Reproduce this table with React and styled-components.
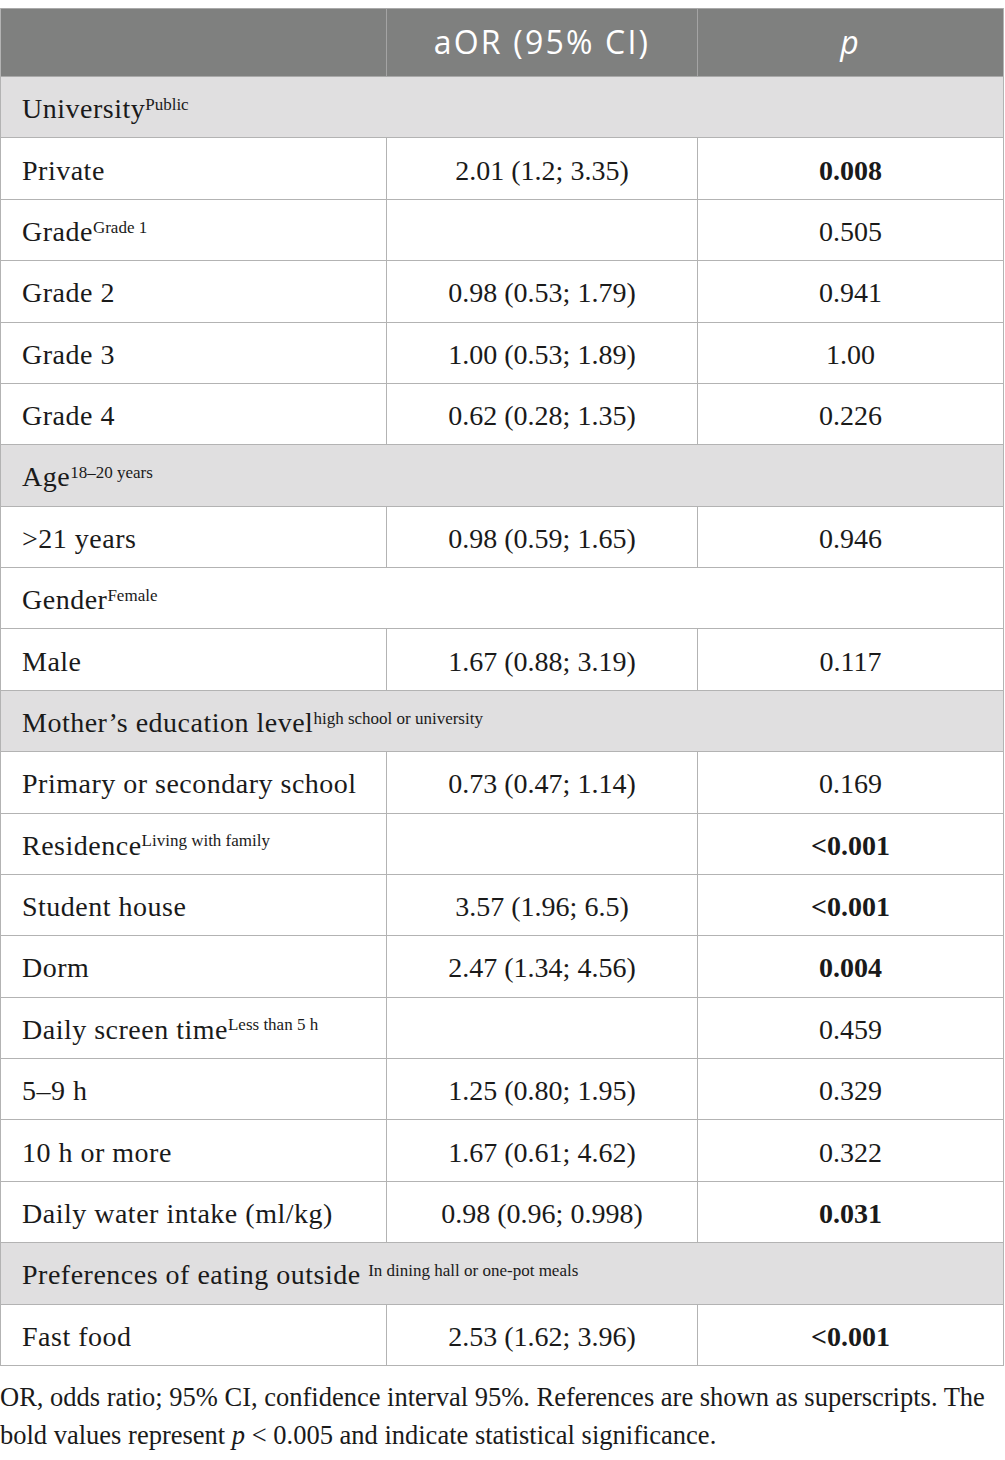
import React from 'react'
import styled, { createGlobalStyle } from 'styled-components'

const Global = createGlobalStyle`
    body {
        margin: 0;
        background: #ffffff;
    }
`

const Page = styled.div`
    width: 1005px;
    padding-top: 8px;
    font-family: "Liberation Serif", "Times New Roman", serif;
    color: #1a1a1a;
`

const Table = styled.div`
    display: flex;
    flex-direction: column;
    border-left: 1px solid #b3b3b3;
    border-right: 1px solid #b3b3b3;
    width: 1004px;
    box-sizing: border-box;
`

const HeadRow = styled.div`
    display: grid;
    grid-template-columns: 385px 311px 1fr;
    height: 69px;
    background: #7f807f;
    border-top: 1px solid #a9a9a9;
    border-bottom: 1px solid #a9a9a9;
    box-sizing: border-box;
`

const HeadCell = styled.div`
    display: flex;
    align-items: center;
    justify-content: center;
    border-left: ${p => (p.$first ? 'none' : '1px solid #a4a4a4')};
    font-family: "Open Sans", "Noto Sans", sans-serif;
    font-size: 32px;
    letter-spacing: 2.2px;
    font-style: ${p => (p.$italic ? 'italic' : 'normal')};
    color: #ffffff;
    padding-bottom: 2px;
`

const Row = styled.div`
    display: grid;
    grid-template-columns: 385px 311px 1fr;
    height: 61.38px;
    border-bottom: 1px solid #b3b3b3;
    box-sizing: border-box;
    background: ${p => (p.$shade ? '#e0dfe0' : '#ffffff')};
`

const FullCell = styled.div`
    grid-column: 1 / -1;
    display: flex;
    align-items: center;
    padding: 4px 0 0 21px;
    font-size: 28px;
    letter-spacing: 0.5px;
    white-space: nowrap;
`

const Label = styled.div`
    display: flex;
    align-items: center;
    padding: 4px 0 0 21px;
    font-size: 28px;
    letter-spacing: 0.5px;
    white-space: nowrap;
`

const Value = styled.div`
    display: flex;
    align-items: center;
    justify-content: center;
    padding-top: 4px;
    border-left: 1px solid #b3b3b3;
    font-size: 28px;
    font-weight: ${p => (p.$bold ? 700 : 400)};
    white-space: nowrap;
`

const Sup = styled.sup`
    font-size: 17px;
    letter-spacing: 0;
    line-height: 0;
    position: relative;
    top: 2px;
    vertical-align: super;
`

const Note = styled.p`
    margin: 12px 0 0 0;
    font-size: 26.5px;
    line-height: 38px;
    white-space: nowrap;
    color: #1a1a1a;
`

const rows = [
    { kind: 'section', label: 'University', ref: 'Public' },
    { label: 'Private', or: '2.01 (1.2; 3.35)', p: '0.008', bold: true },
    { label: 'Grade', ref: 'Grade 1', or: '', p: '0.505' },
    { label: 'Grade 2', or: '0.98 (0.53; 1.79)', p: '0.941' },
    { label: 'Grade 3', or: '1.00 (0.53; 1.89)', p: '1.00' },
    { label: 'Grade 4', or: '0.62 (0.28; 1.35)', p: '0.226' },
    { kind: 'section', label: 'Age', ref: '18–20 years' },
    { label: '>21 years', or: '0.98 (0.59; 1.65)', p: '0.946' },
    { kind: 'plain', label: 'Gender', ref: 'Female' },
    { label: 'Male', or: '1.67 (0.88; 3.19)', p: '0.117' },
    { kind: 'section', label: 'Mother’s education level', ref: 'high school or university' },
    { label: 'Primary or secondary school', or: '0.73 (0.47; 1.14)', p: '0.169' },
    { label: 'Residence', ref: 'Living with family', or: '', p: '<0.001', bold: true },
    { label: 'Student house', or: '3.57 (1.96; 6.5)', p: '<0.001', bold: true },
    { label: 'Dorm', or: '2.47 (1.34; 4.56)', p: '0.004', bold: true },
    { label: 'Daily screen time', ref: 'Less than 5 h', or: '', p: '0.459' },
    { label: '5–9 h', or: '1.25 (0.80; 1.95)', p: '0.329' },
    { label: '10 h or more', or: '1.67 (0.61; 4.62)', p: '0.322' },
    { label: 'Daily water intake (ml/kg)', or: '0.98 (0.96; 0.998)', p: '0.031', bold: true },
    { kind: 'section', label: 'Preferences of eating outside ', ref: 'In dining hall or one-pot meals' },
    { label: 'Fast food', or: '2.53 (1.62; 3.96)', p: '<0.001', bold: true },
]

const Name = ({ label, refText }) => (
    <span>
        {label}
        {refText && <Sup>{refText}</Sup>}
    </span>
)

const App = () => (
    <Page>
        <Global />
        <Table>
            <HeadRow>
                <HeadCell $first />
                <HeadCell>aOR (95% CI)</HeadCell>
                <HeadCell $italic>p</HeadCell>
            </HeadRow>
            {rows.map((r, i) => {
                if (r.kind) {
                    return (
                        <Row key={i} $shade={r.kind === 'section'}>
                            <FullCell>
                                <Name label={r.label} refText={r.ref} />
                            </FullCell>
                        </Row>
                    )
                }
                return (
                    <Row key={i}>
                        <Label>
                            <Name label={r.label} refText={r.ref} />
                        </Label>
                        <Value>{r.or}</Value>
                        <Value $bold={r.bold}>{r.p}</Value>
                    </Row>
                )
            })}
        </Table>
        <Note>
            OR, odds ratio; 95% CI, confidence interval 95%. References are shown as superscripts. The
            <br />
            bold values represent <i>p</i>&nbsp;&lt; 0.005 and indicate statistical significance.
        </Note>
    </Page>
)

export default App
